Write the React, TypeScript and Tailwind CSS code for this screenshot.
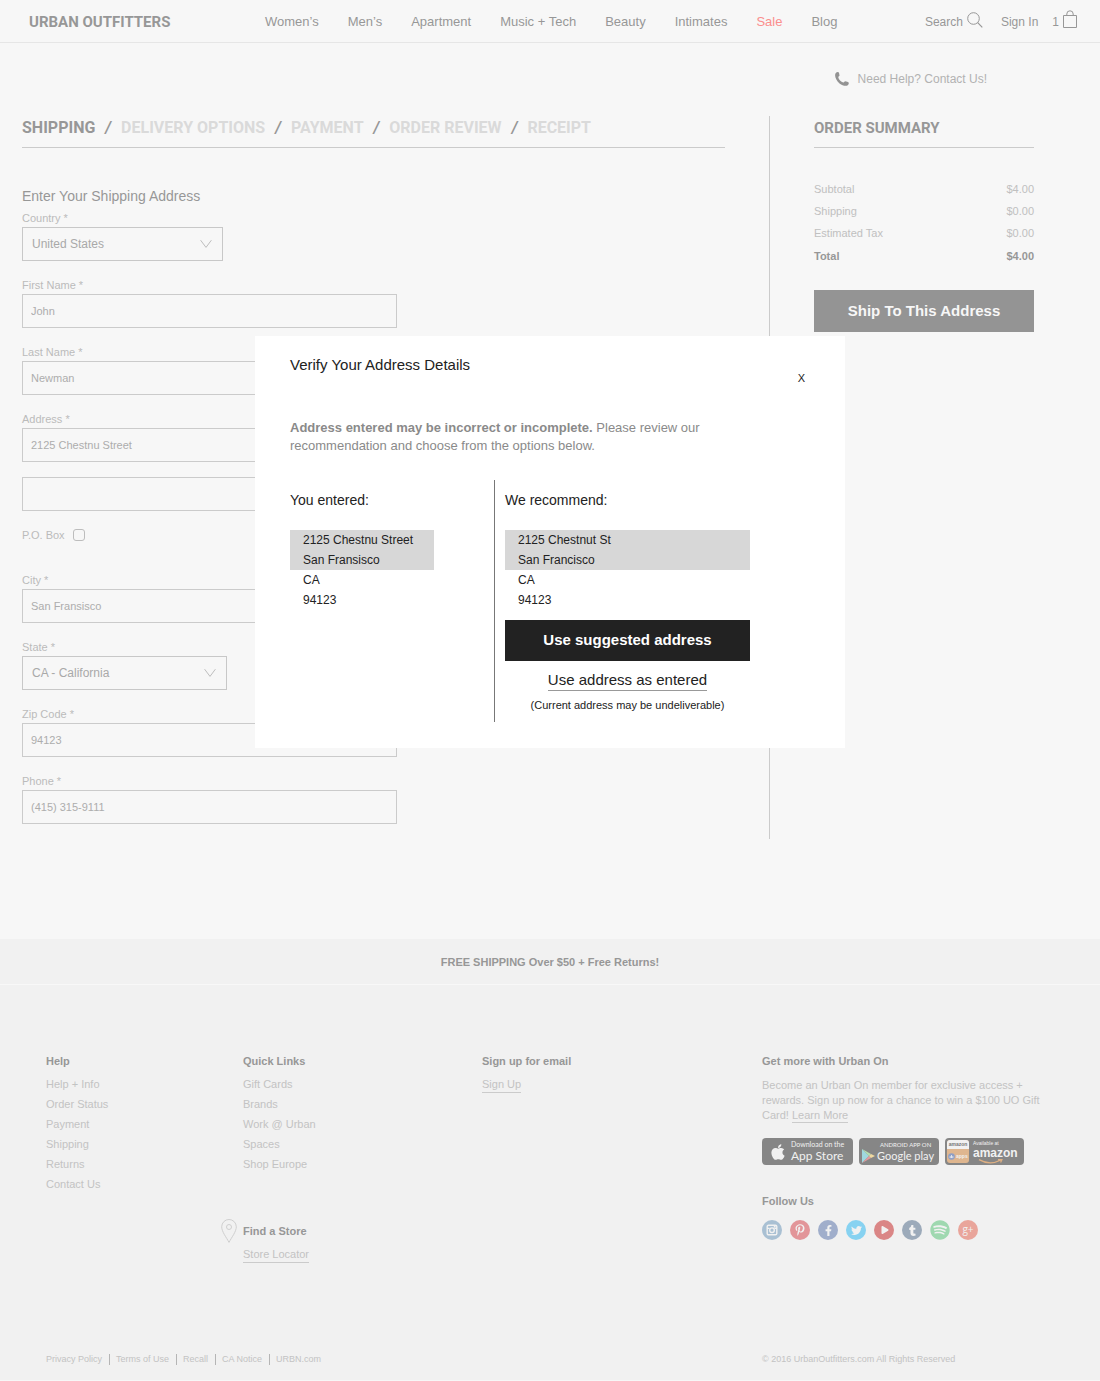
import { useState, type ReactNode } from "react";
import {
  FaApple,
  FaFacebookF,
  FaPinterestP,
  FaPlay,
  FaSpotify,
  FaTumblr,
  FaTwitter,
} from "react-icons/fa";

const NAV = ["Women’s", "Men’s", "Apartment", "Music + Tech", "Beauty", "Intimates", "Sale", "Blog"];

const STEPS = ["Shipping", "Delivery Options", "Payment", "Order Review", "Receipt"];

const TOTALS = [
  { label: "Subtotal", amount: "$4.00" },
  { label: "Shipping", amount: "$0.00" },
  { label: "Estimated Tax", amount: "$0.00" },
  { label: "Total", amount: "$4.00", bold: true },
];

const HELP_LINKS = ["Help + Info", "Order Status", "Payment", "Shipping", "Returns", "Contact Us"];
const QUICK_LINKS = ["Gift Cards", "Brands", "Work @ Urban", "Spaces", "Shop Europe"];
const LEGAL_LINKS = ["Privacy Policy", "Terms of Use", "Recall", "CA Notice", "URBN.com"];

function InstagramGlyph() {
  return (
    <svg viewBox="0 0 12 12" className="size-3" fill="none" stroke="currentColor">
      <rect x="1.2" y="1.2" width="9.6" height="9.6" rx="1.4" strokeWidth="1.4" />
      <path d="M1 4.4h2.6M8.4 4.4H11" strokeWidth="1.2" />
      <circle cx="6" cy="6.2" r="2.3" strokeWidth="1.4" />
      <rect x="7.800" y="2" width="1.800" height="1.600" fill="currentColor" stroke="none" />
    </svg>
  );
}

const SOCIAL: { name: string; color: string; icon: ReactNode }[] = [
  { name: "Instagram", color: "bg-[#a9c0d3] text-[#f1f1f1]", icon: <InstagramGlyph /> },
  { name: "Pinterest", color: "bg-[#e29599] text-[#f1f1f1]", icon: <FaPinterestP className="size-3" /> },
  { name: "Facebook", color: "bg-[#a0aecb] text-[#f1f1f1]", icon: <FaFacebookF className="size-[11px]" /> },
  { name: "Twitter", color: "bg-[#87d2f1] text-[#f1f1f1]", icon: <FaTwitter className="size-[11px]" /> },
  { name: "YouTube", color: "bg-[#da8686] text-[#f1f1f1]", icon: <FaPlay className="ml-px size-[8px]" /> },
  { name: "Tumblr", color: "bg-[#9caaba] text-[#f1f1f1]", icon: <FaTumblr className="size-[11px]" /> },
  { name: "Spotify", color: "text-[#9fd8b0]", icon: <FaSpotify className="size-5" /> },
  {
    name: "Google Plus",
    color: "bg-[#e9a59b] text-[#f1f1f1]",
    icon: <span className="pb-0.5 font-['Open_Sans',sans-serif] text-[10px] leading-3">g+</span>,
  },
];

function Header() {
  return (
    <header className="flex h-[43px] items-center border-b border-[#e6e6e6] pt-0.5 pr-[23px] pl-[29px] text-[#979797]">
      <a
        href="#"
        className="w-[236px] font-['Roboto','Liberation_Sans',sans-serif] text-[15px] leading-5 font-bold whitespace-nowrap"
      >
        URBAN OUTFITTERS
      </a>
      <nav className="flex flex-1 gap-[29px] text-[13px] leading-4 whitespace-nowrap">
        {NAV.map((item) => (
          <a key={item} href="#" className={item === "Sale" ? "text-[#fb8e8e]" : ""}>
            {item}
          </a>
        ))}
      </nav>
      <div className="flex items-center text-[12px] leading-4 whitespace-nowrap">
        <button type="button" className="flex items-center gap-1">
          Search
          <svg viewBox="0 0 16 16" className="mb-1 size-4" fill="none" stroke="currentColor">
            <circle cx="6.5" cy="6.5" r="5.8" />
            <path d="M10.7 10.7l4.6 4.6" strokeWidth="1.2" />
          </svg>
        </button>
        <a href="#" className="ml-[18px]">
          Sign In
        </a>
        <a href="#" className="ml-[14px] flex items-center gap-1">
          1
          <svg viewBox="0 0 14 18" className="mb-1.5 h-[18px] w-[14px]" fill="none" stroke="currentColor">
            <path d="M.5 5.5h13v12H.5z" />
            <path d="M3.8 5.5V4a3.2 3.2 0 0 1 6.4 0v1.5" />
          </svg>
        </a>
      </div>
    </header>
  );
}

function Field({ id, label, defaultValue }: { id: string; label: string; defaultValue: string }) {
  return (
    <div className="mb-[15px]">
      <label htmlFor={id} className="block text-[11px] leading-[18px] text-[#bbbbbb]">
        {label}
      </label>
      <input
        id={id}
        defaultValue={defaultValue}
        className="h-[34px] w-full max-w-[375px] border border-[#cbcbcb] bg-transparent px-2 text-[11px] text-[#adadad]"
      />
    </div>
  );
}

function SelectField({ id, label, value, width }: { id: string; label: string; value: string; width: string }) {
  return (
    <div className="mb-[15px]">
      <label htmlFor={id} className="block text-[11px] leading-[18px] text-[#bbbbbb]">
        {label}
      </label>
      <div className={`relative ${width}`}>
        <select
          id={id}
          defaultValue={value}
          className="block h-[34px] w-full appearance-none border border-[#c8c8c8] bg-transparent pr-8 pl-[9px] text-[12px] text-[#a9a9a9]"
        >
          <option>{value}</option>
        </select>
        <svg
          viewBox="0 0 12 8"
          className="pointer-events-none absolute top-[13px] right-[11px] h-2 w-3"
          fill="none"
          stroke="#bdbdbd"
        >
          <path d="M.6.2L6 7.400 11.4.2" />
        </svg>
      </div>
    </div>
  );
}

function ShippingForm() {
  return (
    <form>
      <h2 className="mt-[37px] mb-0.5 text-[14px] leading-[22px] text-[#979797]">Enter Your Shipping Address</h2>
      <SelectField id="country" label="Country *" value="United States" width="w-[201px]" />
      <Field id="first-name" label="First Name *" defaultValue="John" />
      <Field id="last-name" label="Last Name *" defaultValue="Newman" />
      <Field id="address" label="Address *" defaultValue="2125 Chestnu Street" />
      <input
        aria-label="Address line 2"
        className="mb-[15px] block h-[34px] w-full max-w-[375px] border border-[#cbcbcb] bg-transparent px-2 text-[11px] text-[#adadad]"
      />
      <label className="mb-[27px] flex h-[18px] items-center gap-2 text-[11px] text-[#bbbbbb]">
        P.O. Box
        <input type="checkbox" className="size-3 appearance-none rounded-[3px] border border-[#bdbdbd]" />
      </label>
      <Field id="city" label="City *" defaultValue="San Fransisco" />
      <SelectField id="state" label="State *" value="CA - California" width="w-[205px]" />
      <Field id="zip" label="Zip Code *" defaultValue="94123" />
      <Field id="phone" label="Phone *" defaultValue="(415) 315-9111" />
    </form>
  );
}

function OrderSummary() {
  return (
    <aside className="w-[265px] border-l border-[#cbcbcb] pl-11">
      <h2 className="h-8 border-b border-[#cbcbcb] font-['Roboto','Liberation_Sans',sans-serif] text-[15px] leading-6 font-bold whitespace-nowrap text-[#979797]">
        ORDER SUMMARY
      </h2>
      <table className="mt-[30px] w-full text-[11px] text-[#c0c0c0]">
        <tbody>
          {TOTALS.map((row) => (
            <tr key={row.label} className={row.bold ? "h-6 font-bold text-[#979797]" : "h-[22px]"}>
              <th scope="row" className={row.bold ? "text-left font-bold" : "text-left font-normal"}>
                {row.label}
              </th>
              <td className="text-right">{row.amount}</td>
            </tr>
          ))}
        </tbody>
      </table>
      <button type="button" className="mt-[22px] h-[42px] w-full bg-[#949494] text-[15px] font-bold text-[#f7f7f7]">
        Ship To This Address
      </button>
    </aside>
  );
}

function AddressLines({ lines, width }: { lines: string[]; width: string }) {
  return (
    <ul className={`text-[12px] leading-5 ${width}`}>
      {lines.map((line, i) => (
        <li key={line} className={i < 2 ? "bg-[#d7d7d7] pl-[13px]" : "pl-[13px]"}>
          {line}
        </li>
      ))}
    </ul>
  );
}

function VerifyModal({ onClose }: { onClose: () => void }) {
  return (
    <div className="absolute inset-0 flex items-center justify-center pb-[297px]">
      <div
        role="dialog"
        aria-modal="true"
        aria-labelledby="verify-title"
        className="w-[590px] bg-white pt-[18px] pr-10 pb-[26px] pl-[35px] text-[#222222]"
      >
        <div className="flex justify-between">
          <h2 id="verify-title" className="text-[15px] leading-[22px]">
            Verify Your Address Details
          </h2>
          <button type="button" onClick={onClose} aria-label="Close" className="mt-4 text-[11px] leading-4">
            X
          </button>
        </div>
        <p className="mt-[33px] max-w-[460px] text-[13px] leading-[18px] text-[#8a8a8a]">
          <b>Address entered may be incorrect or incomplete.</b> Please review our recommendation and choose from
          the options below.
        </p>
        <div className="mt-[25px] flex">
          <section className="w-[204px] pt-[10px]">
            <h3 className="mb-5 text-[14px] leading-5">You entered:</h3>
            <AddressLines width="w-[144px]" lines={["2125 Chestnu Street", "San Fransisco", "CA", "94123"]} />
          </section>
          <section className="flex w-[256px] flex-col border-l border-[#777777] pt-[10px] pb-2 pl-[10px]">
            <h3 className="mb-5 text-[14px] leading-5">We recommend:</h3>
            <AddressLines width="w-full" lines={["2125 Chestnut St", "San Francisco", "CA", "94123"]} />
            <button
              type="button"
              onClick={onClose}
              className="mt-[10px] h-[41px] bg-[#222222] text-[15px] font-bold text-white"
            >
              Use suggested address
            </button>
            <button
              type="button"
              onClick={onClose}
              className="mt-2 self-center border-b border-[#999999] text-[15px] leading-[21px]"
            >
              Use address as entered
            </button>
            <p className="mt-[5px] text-center text-[11px] leading-[18px]">(Current address may be undeliverable)</p>
          </section>
        </div>
      </div>
    </div>
  );
}

function StoreBadges() {
  return (
    <div className="mt-[15px] flex gap-[6px] whitespace-nowrap text-[#f1f1f1]">
      <a href="#" className="flex h-[27px] w-[91px] items-center gap-1 rounded bg-[#868686] pl-[7px]">
        <FaApple className="size-[18px]" />
        <span className="flex flex-col font-['Lato',sans-serif]">
          <span className="text-[7px] leading-[9px]">Download on the</span>
          <span className="text-[12px] leading-[14px]">App Store</span>
        </span>
      </a>
      <a href="#" className="flex h-[27px] w-20 items-center gap-0.5 rounded bg-[#868686] pl-[3px]">
        <svg viewBox="0 0 13 14" className="mt-2 h-[14px] w-[13px]">
          <path d="M0 0v14l7-7z" fill="#9fd8df" />
          <path d="M0 0l9 5-2 2z" fill="#b5dfb0" />
          <path d="M0 14l9-5-2-2z" fill="#e39a9d" />
          <path d="M9 5l4 2-4 2-2-2z" fill="#f0d9a0" />
        </svg>
        <span className="flex flex-col">
          <span className="text-center font-['Lato',sans-serif] text-[6px] leading-[9px]">ANDROID APP ON</span>
          <span className="font-['Lato',sans-serif] text-[11px] leading-[14px]">Google play</span>
        </span>
      </a>
      <a href="#" className="flex h-[27px] w-[79px] items-center gap-1 rounded bg-[#868686] pl-0.5">
        <span className="flex h-[23px] w-[22px] flex-col overflow-hidden rounded-[3px] bg-[#dfb68f]">
          <span className="bg-[#f1f1f1] text-center text-[5px] leading-[9px] font-bold text-[#777777]">amazon</span>
          <span className="flex flex-1 items-center gap-px pl-px text-[5px] leading-none font-bold">
            <svg viewBox="0 0 8 8" className="size-[7px]">
              <circle cx="4" cy="4" r="3.8" fill="#8f9fc6" />
              <path d="M2.5 5.8V3.6M4 5.8V2.4M5.5 5.8V3.6" stroke="#f1f1f1" />
            </svg>
            apps
          </span>
        </span>
        <span className="flex flex-col">
          <span className="text-[5px] leading-[7px]">Available at</span>
          <span className="text-[12px] leading-[12px] font-bold">amazon</span>
          <svg viewBox="0 0 34 5" className="h-[5px] w-[34px]" fill="none" stroke="#dfb083" strokeWidth="1.3">
            <path d="M6 .6c7 4 15 4 22 .4M25 .6l4-.2-1.4 3" />
          </svg>
        </span>
      </a>
    </div>
  );
}

function LinkList({ links }: { links: string[] }) {
  return (
    <ul className="mt-[3px] leading-5">
      {links.map((link) => (
        <li key={link}>
          <a href="#">{link}</a>
        </li>
      ))}
    </ul>
  );
}

function Footer() {
  return (
    <footer className="bg-[#f1f1f1] text-[11px] text-[#c3c3c3]">
      <p className="h-[46px] border-b border-[#f8f8f8] text-center leading-[46px] font-bold text-[#979797]">
        FREE SHIPPING Over $50 + Free Returns!
      </p>
      <div className="grid grid-cols-[197fr_239fr_280fr_292fr] px-[46px] pt-[66px]">
        <section>
          <h3 className="leading-5 font-bold text-[#979797]">Help</h3>
          <LinkList links={HELP_LINKS} />
        </section>
        <section>
          <h3 className="leading-5 font-bold text-[#979797]">Quick Links</h3>
          <LinkList links={QUICK_LINKS} />
          <div className="relative mt-[47px]">
            <svg
              viewBox="0 0 16 24"
              className="absolute -top-[2px] -left-[22px] h-6 w-4"
              fill="none"
              stroke="#cfcfcf"
            >
              <path d="M8 23.4C5.6 18.6.7 12.8.7 7.8a7.3 7.3 0 0 1 14.6 0c0 5-4.9 10.8-7.3 15.6z" />
              <circle cx="8" cy="8" r="2.5" />
            </svg>
            <h3 className="leading-5 font-bold text-[#979797]">Find a Store</h3>
            <a href="#" className="mt-[5px] inline-block border-b border-[#cbcbcb] leading-4">
              Store Locator
            </a>
          </div>
        </section>
        <section>
          <h3 className="leading-5 font-bold text-[#979797]">Sign up for email</h3>
          <a href="#" className="mt-[5px] inline-block border-b border-[#cbcbcb] leading-4">
            Sign Up
          </a>
        </section>
        <section>
          <h3 className="leading-5 font-bold text-[#979797]">Get more with Urban On</h3>
          <p className="mt-[7px] leading-[15px]">
            Become an Urban On member for exclusive access + rewards. Sign up now for a chance to win a $100 UO Gift
            Card!{" "}
            <a href="#" className="border-b border-[#cbcbcb] pb-px">
              Learn More
            </a>
          </p>
          <StoreBadges />
          <h3 className="mt-[26px] leading-5 font-bold text-[#979797]">Follow Us</h3>
          <div className="mt-[9px] flex gap-2">
            {SOCIAL.map((s) => (
              <a
                key={s.name}
                href="#"
                aria-label={s.name}
                className={`flex size-5 items-center justify-center rounded-full ${s.color}`}
              >
                {s.icon}
              </a>
            ))}
          </div>
        </section>
      </div>
      <div className="mt-[89px] grid grid-cols-[716fr_292fr] px-[46px] pb-[14px] text-[9px] leading-[14px]">
        <ul className="flex items-center">
          {LEGAL_LINKS.map((link, i) => (
            <li key={link} className={i > 0 ? "ml-[7px] flex h-[11px] items-center border-l border-[#b5b5b5] pl-[6px]" : ""}>
              <a href="#">{link}</a>
            </li>
          ))}
        </ul>
        <p>© 2016 UrbanOutfitters.com All Rights Reserved</p>
      </div>
    </footer>
  );
}

export default function App() {
  const [verifying, setVerifying] = useState(true);

  return (
    <div className="relative min-h-screen bg-[#f7f7f7] font-['Liberation_Sans',Arial,sans-serif]">
      <Header />
      <main className="pr-[66px] pb-[100px] pl-[22px]">
        <div className="flex justify-end pt-7 pr-[47px]">
          <a href="#" className="flex items-center gap-[9px] text-[12px] leading-4 text-[#b2b2b2]">
            <svg viewBox="0 0 14 14" className="size-[14px]" fill="#939393">
              <path d="M.6 1.2C1.6 0 3.6-.3 4 .8l.5 2.6c.1.7-1.3 1-1.2 1.8.3 2.3 2.7 4.7 5 5.2.8.2 1.3-1.2 2-1.1l2.7.7c1.2.4 1 2.3-.2 3.2-1.6 1.2-5.2.8-8.300-1.800C.8 8.300-.8 3.600.6 1.200z" />
            </svg>
            Need Help? Contact Us!
          </a>
        </div>
        <div className="mt-[29px] flex">
          <div className="mr-11 min-w-0 flex-1">
            <ol className="flex h-8 border-b border-[#cbcbcb] font-['Roboto','Liberation_Sans',sans-serif] text-[16px] leading-6 font-bold whitespace-nowrap text-[#dadada] uppercase">
              {STEPS.map((step, i) => (
                <li key={step} className={i === 0 ? "text-[#979797]" : ""}>
                  {i > 0 && <span className="mx-[10px] text-[#979797] italic">/</span>}
                  {step}
                </li>
              ))}
            </ol>
            <ShippingForm />
          </div>
          <OrderSummary />
        </div>
      </main>
      <Footer />
      {verifying && <VerifyModal onClose={() => setVerifying(false)} />}
    </div>
  );
}
